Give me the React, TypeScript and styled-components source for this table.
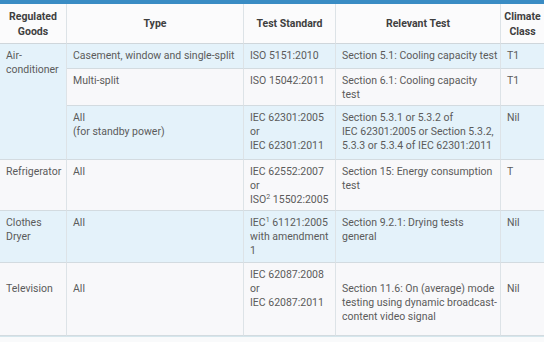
import React from "react";
import styled, { createGlobalStyle } from "styled-components";

const Global = createGlobalStyle`
  html, body { margin: 0; padding: 0; background: #ffffff; }
  body { font-family: Roboto, "Noto Sans", Arial, sans-serif; }
`;

const Page = styled.div`
  width: 544px;
  height: 342px;
  overflow: hidden;
  background: #f9fafb;
`;

const Grid = styled.div`
  display: grid;
  width: 545px;
  grid-template-columns: 67px 177px 92px 165px 44px;
  grid-template-rows: 40px 25px 37px 54px 51px 52px 73px;
  border-top: 4px solid #3a8cc4;
  border-bottom: 1px solid #d5e6ec;
  font-size: 10.5px;
  line-height: 14px;
  color: #5b5b5b;
`;

type CellProps = {
  $tone: "head" | "blue" | "gray";
  $span?: number;
  $indent?: boolean;
  $last?: boolean;
  $nowrap?: boolean;
};

const toneBg = { head: "#fbfbfc", blue: "#e4f2fa", gray: "#f8f8fa" };

const Cell = styled.div<CellProps>`
  box-sizing: border-box;
  background: ${(p) => toneBg[p.$tone]};
  border-right: 1px solid ${(p) => (p.$last ? "transparent" : "#dde3e7")};
  border-bottom: 1px solid #d3dbe0;
  padding: ${(p) => (p.$indent ? "19px" : "5px")} 3px 4px 6px;
  white-space: ${(p) => (p.$nowrap ? "nowrap" : "normal")};
  ${(p) => (p.$span ? `grid-row: span ${p.$span};` : "")}
`;

const Head = styled(Cell)`
  display: flex;
  align-items: center;
  justify-content: center;
  text-align: center;
  font-weight: 700;
  color: #3f3f3f;
  line-height: 15px;
  padding: 0 2px;
  border-bottom-color: #cfd6db;
`;

const Sup = styled.sup`
  font-size: 7px;
  line-height: 0;
  vertical-align: 4px;
`;

export default function App() {
  return (
    <Page>
      <Global />
      <Grid>
        <Head $tone="head">Regulated<br />Goods</Head>
        <Head $tone="head">Type</Head>
        <Head $tone="head">Test Standard</Head>
        <Head $tone="head">Relevant Test</Head>
        <Head $tone="head" $last>Climate<br />Class</Head>

        <Cell $tone="blue" $span={3}>Air-<br />conditioner</Cell>
        <Cell $tone="blue" $nowrap>Casement, window and single-split</Cell>
        <Cell $tone="blue">ISO 5151:2010</Cell>
        <Cell $tone="blue" $nowrap>Section 5.1: Cooling capacity test</Cell>
        <Cell $tone="blue" $last>T1</Cell>

        <Cell $tone="gray">Multi-split</Cell>
        <Cell $tone="gray">ISO 15042:2011</Cell>
        <Cell $tone="gray">Section 6.1: Cooling capacity<br />test</Cell>
        <Cell $tone="gray" $last>T1</Cell>

        <Cell $tone="blue">All<br />(for standby power)</Cell>
        <Cell $tone="blue">IEC 62301:2005<br />or<br />IEC 62301:2011</Cell>
        <Cell $tone="blue" $nowrap>Section 5.3.1 or 5.3.2 of<br />IEC 62301:2005 or Section 5.3.2,<br />5.3.3 or 5.3.4 of IEC 62301:2011</Cell>
        <Cell $tone="blue" $last>Nil</Cell>

        <Cell $tone="gray">Refrigerator</Cell>
        <Cell $tone="gray">All</Cell>
        <Cell $tone="gray" $nowrap>IEC 62552:2007<br />or<br />ISO<Sup>2</Sup> 15502:2005</Cell>
        <Cell $tone="gray">Section 15: Energy consumption<br />test</Cell>
        <Cell $tone="gray" $last>T</Cell>

        <Cell $tone="blue">Clothes<br />Dryer</Cell>
        <Cell $tone="blue">All</Cell>
        <Cell $tone="blue" $nowrap>IEC<Sup>1</Sup> 61121:2005<br />with amendment<br />1</Cell>
        <Cell $tone="blue">Section 9.2.1: Drying tests<br />general</Cell>
        <Cell $tone="blue" $last>Nil</Cell>

        <Cell $tone="gray" $indent>Television</Cell>
        <Cell $tone="gray" $indent>All</Cell>
        <Cell $tone="gray">IEC 62087:2008<br />or<br />IEC 62087:2011</Cell>
        <Cell $tone="gray" $indent $nowrap>Section 11.6: On (average) mode<br />testing using dynamic broadcast-<br />content video signal</Cell>
        <Cell $tone="gray" $indent $last>Nil</Cell>
      </Grid>
    </Page>
  );
}
